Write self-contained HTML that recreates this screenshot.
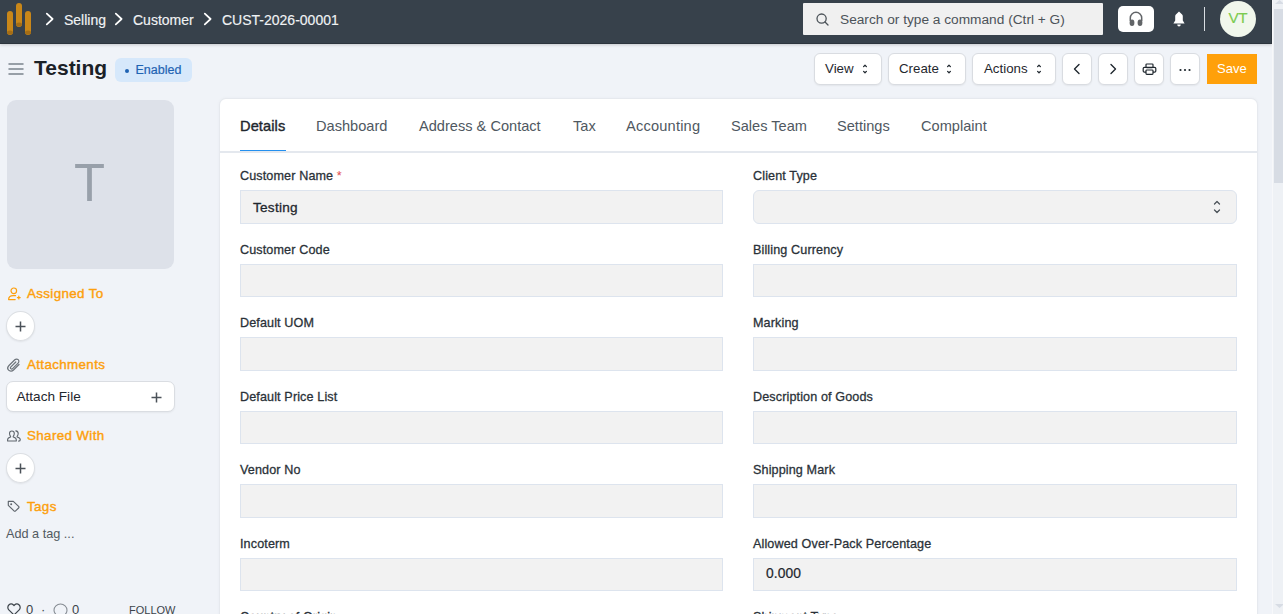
<!DOCTYPE html>
<html><head><meta charset="utf-8">
<style>
*{box-sizing:border-box;margin:0;padding:0}
html,body{width:1283px;height:614px;overflow:hidden}
body{background:#f0f3f8;font-family:"Liberation Sans",sans-serif;position:relative;color:#1f272e}
.a{position:absolute;white-space:nowrap}
#nav{position:absolute;left:0;top:0;width:1272px;height:44px;background:#37414b;box-shadow:0 1px 3px rgba(0,0,0,.18)}
#nav::after{content:"";position:absolute;left:0;right:0;bottom:0;height:1px;background:#2c343d}
.crumb{color:#f0f2f4;font-size:14px;top:12px;-webkit-text-stroke:0.15px #f0f2f4}
.chev{position:absolute}
#search{position:absolute;left:803px;top:3px;width:300px;height:32px;background:#f0f0f0;border-radius:1px}
#search .t{position:absolute;left:37px;top:9px;font-size:13.7px;color:#4c5359}
#hp{position:absolute;left:1118px;top:6px;width:36px;height:26px;background:#fff;border-radius:5px}
#vdiv{position:absolute;left:1204px;top:7px;width:1px;height:24px;background:#d9dde2}
#avatar{position:absolute;left:1220px;top:1px;width:36px;height:36px;border-radius:50%;background:#f1f7ec;color:#7ccb4f;font-size:15.3px;letter-spacing:-0.4px;text-indent:-0.4px;text-align:center;line-height:34px;-webkit-text-stroke:0.15px #7ccb4f}
/* page head */
.btn{position:absolute;top:53px;height:31.5px;background:#fff;border:1px solid #d9dce1;border-radius:6px;box-shadow:0 1px 2px rgba(0,0,0,.06)}
.btn .t{position:absolute;top:7.5px;font-size:13.3px;color:#1f272e}
#save{position:absolute;left:1207px;top:54px;width:50px;height:30px;background:#ffa00a;color:#fff;font-size:13px}
/* sidebar */
#img{position:absolute;left:7px;top:100px;width:167px;height:169px;background:#dde1e9;border-radius:9px}
.sh{position:absolute;font-size:13.4px;color:#fd9f0c;-webkit-text-stroke:0.4px #fd9f0c;letter-spacing:0.35px}
.pc{position:absolute;left:6px;width:29px;height:30px;border-radius:50%;background:#fff;border:1px solid #dcdfe3;box-shadow:0 1px 2px rgba(0,0,0,.07)}
/* card */
#card{position:absolute;left:220px;top:99px;width:1037px;height:600px;background:#fff;border-radius:6px;box-shadow:0 0 0 1px #e6e9ee,0 0 4px rgba(30,40,60,.06)}
#tabline{position:absolute;left:220px;top:151px;width:1037px;height:1.5px;background:#e4e8ee}
.tab{position:absolute;top:117.5px;font-size:14.6px;color:#4f5861}
.lbl{position:absolute;font-size:12.6px;color:#2a3138;-webkit-text-stroke:0.28px #2a3138;letter-spacing:0.12px}
.inp{position:absolute;height:33.5px;background:#f2f2f2;border:1px solid #dde4ee}
</style></head>
<body>
<div id="nav">
  <div class="a" style="right:0;top:0;width:1px;height:44px;background:#2e3740"></div>
  <!-- logo -->
  <svg class="a" style="left:0;top:0" width="40" height="44" viewBox="0 0 40 44">
    <g fill="#c98719">
      <rect x="7" y="11" width="6" height="24" rx="3"/>
      <rect x="16" y="3" width="6" height="24" rx="3"/>
      <rect x="25" y="11" width="6" height="24" rx="3"/>
    </g>
    <g fill="#a46d16">
      <ellipse cx="10" cy="32.5" rx="3" ry="2"/>
      <ellipse cx="19" cy="24.5" rx="3" ry="2"/>
      <ellipse cx="28" cy="32.5" rx="3" ry="2"/>
    </g>
  </svg>
  <svg class="chev" style="left:44px;top:11px" width="12" height="17" viewBox="0 0 12 17"><path d="M2.8 2.6 L8.6 8 L2.8 13.4" fill="none" stroke="#fff" stroke-width="1.75" stroke-linecap="round" stroke-linejoin="round"/></svg>
  <div class="a crumb" style="left:64px">Selling</div>
  <svg class="chev" style="left:113px;top:11px" width="12" height="17" viewBox="0 0 12 17"><path d="M2.8 2.6 L8.6 8 L2.8 13.4" fill="none" stroke="#fff" stroke-width="1.75" stroke-linecap="round" stroke-linejoin="round"/></svg>
  <div class="a crumb" style="left:133px">Customer</div>
  <svg class="chev" style="left:202px;top:11px" width="12" height="17" viewBox="0 0 12 17"><path d="M2.8 2.6 L8.6 8 L2.8 13.4" fill="none" stroke="#fff" stroke-width="1.75" stroke-linecap="round" stroke-linejoin="round"/></svg>
  <div class="a crumb" style="left:222px">CUST-2026-00001</div>

  <div id="search">
    <svg class="a" style="left:13px;top:10px" width="13" height="13" viewBox="0 0 13 13"><circle cx="5.6" cy="5.6" r="4.6" fill="none" stroke="#4c5359" stroke-width="1.3"/><path d="M9 9 L12 12" stroke="#4c5359" stroke-width="1.3" stroke-linecap="round"/></svg>
    <div class="t">Search or type a command (Ctrl + G)</div>
  </div>
  <div id="hp">
    <svg class="a" style="left:10px;top:4px" width="16" height="17" viewBox="0 0 16 17"><path d="M2.3 11 V8 a5.7 5.7 0 0 1 11.4 0 V11" fill="none" stroke="#626568" stroke-width="1.5"/><ellipse cx="4" cy="12.8" rx="2.4" ry="3.2" fill="#626568"/><ellipse cx="12" cy="12.8" rx="2.4" ry="3.2" fill="#626568"/></svg>
  </div>
  <svg class="a" style="left:1172px;top:11px" width="14" height="16" viewBox="0 0 14 16"><path d="M7 0.4 L10.1 3.4 C10.6 3.9 10.8 4.5 10.8 5.2 V9.4 L12.6 12.6 H1.4 L3.2 9.4 V5.2 C3.2 4.5 3.4 3.9 3.9 3.4 Z" fill="#fff"/><path d="M5.3 13.4 H8.7 V14 a1.7 1.4 0 0 1 -3.4 0Z" fill="#fff"/></svg>
  <div id="vdiv"></div>
  <div id="avatar">VT</div>
</div>

<!-- page head -->
<svg class="a" style="left:8px;top:63px" width="16" height="12" viewBox="0 0 16 12"><g fill="#979fa7"><rect x="0.3" y="0" width="15.4" height="2" rx="0.8"/><rect x="0.3" y="5" width="15.4" height="2" rx="0.8"/><rect x="0.3" y="10" width="15.4" height="2" rx="0.8"/></g></svg>
<div class="a" style="left:34px;top:56px;font-size:21px;font-weight:bold;color:#1b2127">Testing</div>
<div class="a" style="left:115px;top:58px;width:77px;height:24px;border-radius:6px;background:#d6e8fb"></div>
<div class="a" style="left:125px;top:69px;width:4px;height:4px;border-radius:50%;background:#1f63b3"></div>
<div class="a" style="left:135.5px;top:63px;font-size:12.5px;color:#1f63b3;-webkit-text-stroke:0.2px #1f63b3">Enabled</div>

<div class="btn" style="left:814px;width:68px"><div class="t" style="left:10px;top:7px">View</div>
  <svg class="a" style="left:47px;top:9px" width="6" height="12" viewBox="0 0 6 12"><path d="M1.6 3.6 L3 2.2 L4.4 3.6 M1.6 8.4 L3 9.8 L4.4 8.4" fill="none" stroke="#1f272e" stroke-width="1.25" stroke-linecap="round" stroke-linejoin="round"/></svg></div>
<div class="btn" style="left:888px;width:78px"><div class="t" style="left:10px;top:7px">Create</div>
  <svg class="a" style="left:57px;top:9px" width="6" height="12" viewBox="0 0 6 12"><path d="M1.6 3.6 L3 2.2 L4.4 3.6 M1.6 8.4 L3 9.8 L4.4 8.4" fill="none" stroke="#1f272e" stroke-width="1.25" stroke-linecap="round" stroke-linejoin="round"/></svg></div>
<div class="btn" style="left:972px;width:84px"><div class="t" style="left:11px;top:7px">Actions</div>
  <svg class="a" style="left:63px;top:9px" width="6" height="12" viewBox="0 0 6 12"><path d="M1.6 3.6 L3 2.2 L4.4 3.6 M1.6 8.4 L3 9.8 L4.4 8.4" fill="none" stroke="#1f272e" stroke-width="1.25" stroke-linecap="round" stroke-linejoin="round"/></svg></div>
<div class="btn" style="left:1062px;width:30px">
  <svg class="a" style="left:9px;top:9px" width="10" height="12" viewBox="0 0 10 12"><path d="M7 1.5 L2.5 6 L7 10.5" fill="none" stroke="#1f272e" stroke-width="1.4" stroke-linecap="round" stroke-linejoin="round"/></svg></div>
<div class="btn" style="left:1098px;width:30px">
  <svg class="a" style="left:9px;top:9px" width="10" height="12" viewBox="0 0 10 12"><path d="M3 1.5 L7.5 6 L3 10.5" fill="none" stroke="#1f272e" stroke-width="1.4" stroke-linecap="round" stroke-linejoin="round"/></svg></div>
<div class="btn" style="left:1134px;width:30px">
  <svg class="a" style="left:6.5px;top:9px" width="15" height="13" viewBox="0 0 15 13"><g fill="none" stroke="#1f272e" stroke-width="1.2" stroke-linejoin="round"><rect x="4" y="1" width="7" height="3.6" rx="0.8"/><rect x="1.2" y="4.4" width="12.6" height="4.8" rx="1.2"/><rect x="4" y="7" width="7" height="4.4" rx="0.8" fill="#fff"/></g></svg></div>
<div class="btn" style="left:1170px;width:30px">
  <svg class="a" style="left:8px;top:14px" width="12" height="4" viewBox="0 0 12 4"><g fill="#1f272e"><circle cx="1.5" cy="2" r="1.1"/><circle cx="6" cy="2" r="1.1"/><circle cx="10.5" cy="2" r="1.1"/></g></svg></div>
<div id="save"><div class="a" style="left:10px;top:7px">Save</div></div>

<!-- sidebar -->
<div id="img"><div class="a" style="left:67px;top:51px;font-size:54px;color:#98a0aa;font-weight:normal;transform:scaleX(.94);transform-origin:left top">T</div></div>

<!-- sidebar sections -->
<svg class="a" style="left:7px;top:287px" width="14" height="14" viewBox="0 0 14 14"><g fill="none" stroke="#fd9f0c" stroke-width="1.2" stroke-linecap="round" stroke-linejoin="round"><circle cx="6.8" cy="3.8" r="2.8"/><path d="M8.6 8.6 H6.2 C3.2 8.6 1.6 10.2 1.6 12.6 H8.2"/><path d="M10.4 10.6 H13.2 M11.8 9.2 V12"/></g></svg>
<div class="sh" style="left:27px;top:286px">Assigned To</div>
<div class="pc" style="top:311px"><svg class="a" style="left:8px;top:8.5px" width="11" height="11" viewBox="0 0 11 11"><path d="M5.5 0.5V10.5M0.5 5.5H10.5" stroke="#4b5259" stroke-width="1.5"/></svg></div>

<svg class="a" style="left:7px;top:358px" width="14" height="15" viewBox="0 0 14 15"><path d="M12 6.5 L6.5 12 C5 13.5 2.8 13.5 1.6 12.2 C0.4 11 0.5 9 2 7.5 L7.8 1.8 C8.8 0.8 10.3 0.8 11.2 1.7 C12.1 2.6 12.1 4.1 11.1 5.1 L5.6 10.6 C5.1 11.1 4.3 11.1 3.8 10.6 C3.3 10.1 3.4 9.3 3.9 8.8 L8.8 4" fill="none" stroke="#6c737a" stroke-width="1.2" stroke-linecap="round"/></svg>
<div class="sh" style="left:27px;top:357px">Attachments</div>
<div class="a" style="left:6px;top:381px;width:169px;height:31px;background:#fff;border-radius:7px;border:1px solid #dadde2;box-shadow:0 1px 2px rgba(0,0,0,.05)"></div>
<div class="a" style="left:16.5px;top:389px;font-size:13.6px;color:#1f272e">Attach File</div>
<svg class="a" style="left:151px;top:391.5px" width="11" height="11" viewBox="0 0 11 11"><path d="M5.5 0.5V10.5M0.5 5.5H10.5" stroke="#4b5259" stroke-width="1.5"/></svg>

<svg class="a" style="left:7px;top:430px" width="15" height="13" viewBox="0 0 15 13"><g fill="none" stroke="#5f666d" stroke-width="1.1" stroke-linejoin="round" stroke-linecap="round"><path d="M3.6 6.4 C2.9 5.7 2.5 4.7 2.5 3.6 C2.5 2.1 3.5 1 4.9 1 C6.3 1 7.3 2.1 7.3 3.6 C7.3 4.7 6.9 5.7 6.2 6.4 V7 C8.2 7.5 9.3 8.4 9.3 9.8 V11 H0.6 V9.8 C0.6 8.4 1.6 7.5 3.6 7 Z"/><path d="M8.8 0.9 C10.2 1.1 11.2 2.2 11.2 3.6 C11.2 4.7 10.8 5.7 10.1 6.4 V7 C12.1 7.5 13.3 8.4 13.3 9.8 C13.3 10.6 12.8 11.1 11.6 11.1"/></g></svg>
<div class="sh" style="left:27px;top:428px">Shared With</div>
<div class="pc" style="top:453px"><svg class="a" style="left:8px;top:8.5px" width="11" height="11" viewBox="0 0 11 11"><path d="M5.5 0.5V10.5M0.5 5.5H10.5" stroke="#4b5259" stroke-width="1.5"/></svg></div>

<svg class="a" style="left:7px;top:500px" width="14" height="14" viewBox="0 0 14 14"><path d="M1.3 1.3 H6.3 L11.6 6.4 C12.1 6.9 12.1 7.5 11.6 8 L8.6 10.9 C8.1 11.4 7.5 11.4 7 10.9 L1.3 5.3 Z" fill="none" stroke="#5f666d" stroke-width="1.15" stroke-linejoin="round"/><circle cx="4.2" cy="4.2" r="1" fill="#5f666d"/></svg>
<div class="sh" style="left:27px;top:499px">Tags</div>
<div class="a" style="left:6px;top:527px;font-size:12.7px;color:#525a61">Add a tag ...</div>

<svg class="a" style="left:7px;top:603px" width="14" height="13" viewBox="0 0 14 13"><path d="M7 12 L1.8 6.8 C0.5 5.5 0.5 3.3 1.8 2 C3.1 0.7 5.2 0.7 6.5 2 L7 2.5 L7.5 2 C8.8 0.7 10.9 0.7 12.2 2 C13.5 3.3 13.5 5.5 12.2 6.8Z" fill="none" stroke="#3c434a" stroke-width="1.2" stroke-linejoin="round"/></svg>
<div class="a" style="left:26px;top:602px;font-size:13px;color:#3c434a">0</div>
<div class="a" style="left:41px;top:602px;font-size:13px;color:#3c434a">·</div>
<svg class="a" style="left:53px;top:603px" width="15" height="13" viewBox="0 0 15 13"><path d="M3 11.5 C1.8 10.4 1 8.9 1 7.2 C1 3.8 3.9 1 7.5 1 C11.1 1 14 3.8 14 7.2 C14 10.6 11.1 13.4 7.5 13.4" fill="none" stroke="#858b92" stroke-width="1.05"/></svg>
<div class="a" style="left:72px;top:602px;font-size:13px;color:#3c434a">0</div>
<div class="a" style="left:129px;top:604px;font-size:11px;color:#3c434a;letter-spacing:0">FOLLOW</div>

<!-- card -->
<div id="card"></div>
<div id="tabline"></div>
<div class="a" style="left:240px;top:150px;width:46px;height:1px;background:#2490ef"></div>
<div class="tab" style="left:240px;color:#1f272e;font-size:14.6px;-webkit-text-stroke:0.4px #1f272e;letter-spacing:0.1px">Details</div>
<div class="tab" style="left:316px">Dashboard</div>
<div class="tab" style="left:419px">Address &amp; Contact</div>
<div class="tab" style="left:573px">Tax</div>
<div class="tab" style="left:626px;letter-spacing:0.2px">Accounting</div>
<div class="tab" style="left:731px">Sales Team</div>
<div class="tab" style="left:837px">Settings</div>
<div class="tab" style="left:921px">Complaint</div>
<div class="lbl" style="left:240px;top:169px">Customer Name <span style="color:#e24c4c;-webkit-text-stroke:0">*</span></div>
<div class="inp" style="left:240px;top:190.0px;width:483px"></div>
<div class="lbl" style="left:240px;top:242.5px">Customer Code</div>
<div class="inp" style="left:240px;top:263.5px;width:483px"></div>
<div class="lbl" style="left:240px;top:316px">Default UOM</div>
<div class="inp" style="left:240px;top:337.0px;width:483px"></div>
<div class="lbl" style="left:240px;top:389.5px">Default Price List</div>
<div class="inp" style="left:240px;top:410.5px;width:483px"></div>
<div class="lbl" style="left:240px;top:463px">Vendor No</div>
<div class="inp" style="left:240px;top:484.0px;width:483px"></div>
<div class="lbl" style="left:240px;top:536.5px">Incoterm</div>
<div class="inp" style="left:240px;top:557.5px;width:483px"></div>
<div class="lbl" style="left:240px;top:610px">Country of Origin</div>
<div class="inp" style="left:240px;top:631.0px;width:483px"></div>
<div class="lbl" style="left:753px;top:169px">Client Type</div>
<div class="inp" style="left:753px;top:190.0px;width:484px;border-radius:6px;"></div>
<div class="lbl" style="left:753px;top:242.5px">Billing Currency</div>
<div class="inp" style="left:753px;top:263.5px;width:484px;"></div>
<div class="lbl" style="left:753px;top:316px">Marking</div>
<div class="inp" style="left:753px;top:337.0px;width:484px;"></div>
<div class="lbl" style="left:753px;top:389.5px">Description of Goods</div>
<div class="inp" style="left:753px;top:410.5px;width:484px;"></div>
<div class="lbl" style="left:753px;top:463px">Shipping Mark</div>
<div class="inp" style="left:753px;top:484.0px;width:484px;"></div>
<div class="lbl" style="left:753px;top:536.5px">Allowed Over-Pack Percentage</div>
<div class="inp" style="left:753px;top:557.5px;width:484px;"></div>
<div class="lbl" style="left:753px;top:610px">Shipment Type</div>
<div class="inp" style="left:753px;top:631.0px;width:484px;"></div>
<div class="a" style="left:253px;top:199.5px;font-size:13.6px;color:#1f272e;-webkit-text-stroke:0.3px #1f272e;letter-spacing:0.25px">Testing</div>
<div class="a" style="left:766px;top:566px;font-size:13.8px;color:#1f272e;-webkit-text-stroke:0.2px #1f272e;letter-spacing:0.1px">0.000</div>
<svg class="a" style="left:1213px;top:200px" width="8" height="14" viewBox="0 0 8 14"><path d="M1.5 4 L4 1.5 L6.5 4 M1.5 10 L4 12.5 L6.5 10" fill="none" stroke="#4c5359" stroke-width="1.3" stroke-linecap="round" stroke-linejoin="round"/></svg>
<!-- scrollbar -->
<div class="a" style="left:1272px;top:0;width:11px;height:614px;background:#eef1f5;border-left:1px solid #f7f8fa"></div>
<div class="a" style="left:1274px;top:9px;width:9px;height:174px;background:#d7dce4"></div>
<svg class="a" style="left:1275px;top:0" width="9" height="4" viewBox="0 0 9 4"><path d="M4.5 0 L9 4 H0Z" fill="#d7dce4"/></svg>
<svg class="a" style="left:1275px;top:604px" width="9" height="4" viewBox="0 0 9 4"><path d="M0 0 H9 L4.5 4Z" fill="#d7dce4"/></svg>
</body></html>
